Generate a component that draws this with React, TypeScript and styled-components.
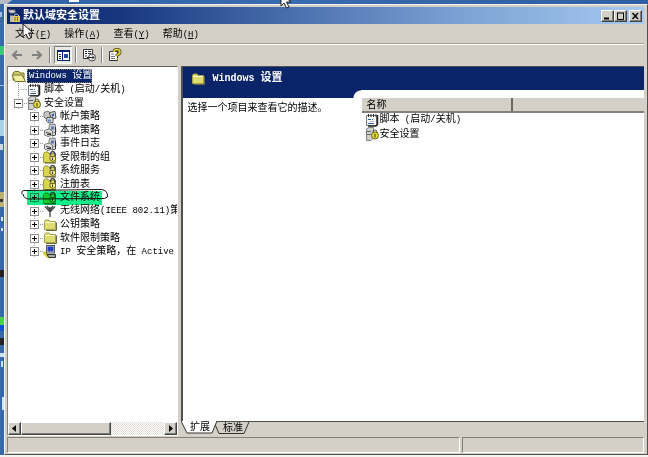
import React from "react";
import styled, { createGlobalStyle, css } from "styled-components";

const face = "#d4d0c8";
const navy = "#0a246a";

const GlobalStyle = createGlobalStyle`
  * { box-sizing: border-box; }
  html, body, #root { height: 100%; margin: 0; }
  body {
    overflow: hidden;
    background: #2f62a8;
    color: #000;
    font: 10px/13px "Liberation Mono", "Noto Sans CJK SC", monospace;
  }
  button { font: inherit; color: inherit; padding: 0; border: 0; background: none; }
  ul { list-style: none; margin: 0; padding: 0; }
`;

const raised = css`
  border: 1px solid;
  border-color: #fff #404040 #404040 #fff;
  box-shadow: inset -1px -1px #808080;
`;

const Desktop = styled.div`
  position: relative;
  display: grid;
  height: 100%;
  padding: 4px 0 2px 4px;
  background: linear-gradient(90deg, #3a6bae, #2f62a8 6px, #3a6bae 45%, #2f5fa4);
`;

const DesktopArt = styled.svg`
  position: absolute;
  left: 0;
  top: 0;
`;

const Window = styled.main`
  position: relative;
  display: flex;
  flex-direction: column;
  min-width: 0;
  min-height: 0;
  padding: 2px 3px 1px 2px;
  background: ${face};
  border: 1px solid;
  border-color: #f4f2ec #505050 #505050 #f4f2ec;
`;

const TitleBar = styled.header`
  display: flex;
  align-items: center;
  flex: none;
  height: 17px;
  padding: 0 2px 0 1px;
  gap: 2px;
  color: #fff;
  background: linear-gradient(90deg, ${navy}, #18377f 18%, #4a70ae 45%, #7b9fd2 70%, #a6caf0);
`;

const Title = styled.h1`
  flex: 1;
  margin: 0;
  font-size: 11px;
  line-height: 16px;
`;

const Captions = styled.div`
  display: flex;
`;

const CaptionButton = styled.button<{ $apart?: boolean }>`
  ${raised}
  display: grid;
  place-items: center;
  width: 13px;
  height: 12px;
  margin-left: ${(p) => (p.$apart ? 2 : 0)}px;
  background: ${face};
`;

const MenuBar = styled.nav`
  display: flex;
  align-items: center;
  flex: none;
  height: 20px;
  padding: 2px 0 0 8px;
  gap: 13px;
  border-bottom: 1px solid #a5a199;
`;

const MenuButton = styled.button`
  display: flex;
  align-items: center;
  line-height: 14px;
  white-space: nowrap;
`;

const Latin = styled.span`
  font-size: 9px;
`;

const ToolBar = styled.div`
  display: flex;
  align-items: center;
  flex: none;
  height: 22px;
  padding: 0 1px 1px;
  gap: 2px;
  border-top: 1px solid #fff;
`;

const ToolButton = styled.button<{ $pressed?: boolean }>`
  display: grid;
  place-items: center;
  width: 18px;
  height: 18px;
  ${(p) =>
    p.$pressed &&
    css`
      background: #eceae5;
      border: 1px solid;
      border-color: #808080 #fff #fff #808080;
    `}
`;

const ToolDivider = styled.span`
  width: 2px;
  height: 16px;
  margin: 0 1px;
  border-left: 1px solid #808080;
  border-right: 1px solid #fff;
`;

const Panes = styled.div`
  display: grid;
  grid-template-columns: minmax(120px, 172fr) minmax(0, 464fr);
  gap: 3px;
  flex: 1;
  min-height: 0;
`;

const TreePane = styled.section`
  display: flex;
  flex-direction: column;
  min-width: 0;
  background: #fff;
  border: 1px solid;
  border-color: #606060 #fff #fff #808080;
`;

const Tree = styled.ul`
  flex: 1;
  overflow: hidden;
  && { padding: 2px 0 0 3px; }
`;

const TreeRow = styled.li<{ $level: number; $even?: boolean }>`
  display: flex;
  align-items: center;
  height: ${(p) => (p.$even ? 14 : 13)}px;
  padding-left: ${(p) => p.$level * 16}px;
  white-space: nowrap;
`;

const Entry = styled.div<{ $marked?: boolean }>`
  position: relative;
  display: flex;
  align-items: center;
  height: 14px;
  ${(p) =>
    p.$marked &&
    css`
      padding-right: 2px;
      &::after {
        content: "";
        position: absolute;
        inset: 0;
        background: #12f08c;
        mix-blend-mode: multiply;
        pointer-events: none;
      }
    `}
`;

const Outline = styled.svg`
  position: absolute;
  left: -6px;
  top: -3px;
  z-index: 1;
`;

const Expander = styled.button`
  display: grid;
  place-items: center;
  flex: none;
  width: 16px;
  height: 13px;
`;

const Glyph = styled.svg`
  display: block;
  flex: none;
`;

const Label = styled.span<{ $selected?: boolean }>`
  display: block;
  padding: 0 0 0 3px;
  line-height: 13px;
  ${(p) => p.$selected && `padding-left: 2px; color: #fff; background: ${navy}; outline: 1px dotted #8a8466; outline-offset: -1px;`}
`;

const ScrollBar = styled.div`
  display: flex;
  flex: none;
  height: 13px;
  background: repeating-conic-gradient(#fff 0 25%, #e0ddd7 0 50%) 0 0 / 2px 2px;
`;

const ScrollArrow = styled.button`
  ${raised}
  display: grid;
  place-items: center;
  width: 13px;
  background: ${face};
`;

const Thumb = styled.div`
  ${raised}
  width: 90px;
  background: ${face};
`;

const Track = styled.div`
  flex: 1;
`;

const ResultColumn = styled.section`
  display: flex;
  flex-direction: column;
  min-width: 0;
`;

const ResultPane = styled.div`
  position: relative;
  display: flex;
  flex-direction: column;
  flex: 1;
  min-height: 0;
  background: #fff;
  border: solid #505050;
  border-width: 1px 0 1px 2px;
`;

const Banner = styled.div`
  display: flex;
  align-items: flex-start;
  flex: none;
  height: 23px;
  padding: 5px 8px;
  gap: 7px;
  color: #fff;
  background: ${navy};
`;

const BannerTitle = styled.h2`
  margin: 0;
  font-size: 10px;
  line-height: 13px;
  span { font-size: 11px; }
`;

const Extended = styled.div`
  display: grid;
  grid-template-columns: 170px minmax(0, 1fr);
`;

const Description = styled.div`
  &::before {
    content: "";
    display: block;
    height: 8px;
    background: ${navy};
  }
`;

const DescriptionText = styled.p`
  margin: 0;
  padding: 4px;
  line-height: 13px;
`;

const ListArea = styled.div`
  padding: 8px 0 0 9px;
  background: radial-gradient(circle at 8px 8px, transparent 7px, ${navy} 8px) 0 0 / 8px 8px no-repeat #fff;
`;

const List = styled.table`
  width: 100%;
  border-collapse: collapse;
  table-layout: fixed;
  th {
    height: 14px;
    padding: 2px 4px 0;
    background: ${face};
    border-bottom: 2px solid #85817a;
    font-weight: normal;
    text-align: left;
    line-height: 11px;
  }
  th + th { border-left: 2px solid #68655f; }
  th:first-child { width: 150px; }
  td { padding: 0 3px; }
`;

const Item = styled.div`
  display: flex;
  align-items: center;
  height: 14px;
  white-space: nowrap;
`;

const Tabs = styled.div`
  display: flex;
  flex: none;
  height: 14px;
`;

const Tab = styled.button<{ $active?: boolean }>`
  position: relative;
  width: 37px;
  height: 13px;
  margin-right: -4px;
  line-height: 13px;
  z-index: ${(p) => (p.$active ? 1 : 0)};
  margin-top: ${(p) => (p.$active ? -1 : 0)}px;
`;

const TabShape = styled.svg`
  position: absolute;
  left: 0;
  top: 0;
  z-index: -1;
`;

const StatusBar = styled.footer`
  display: grid;
  grid-template-columns: 455fr 183fr;
  gap: 2px;
  flex: none;
  height: 16px;
  margin-top: 1px;
`;

const StatusCell = styled.div`
  border: 1px solid;
  border-color: #85817a #fff #fff #85817a;
`;

const Cursor = styled.svg`
  position: absolute;
  pointer-events: none;
`;

const TitleCursor = styled(Cursor)`
  left: 22px;
  top: 23px;
`;

const DesktopCursor = styled(Cursor)`
  left: 280px;
  top: -8px;
`;

type IconName = "folder" | "script" | "security" | "policy" | "account" | "locked" | "wireless" | "ip";

const shapes: Record<IconName, React.ReactNode> = {
  folder: (
    <>
      <path d="M1.500 3.500L2.500 2H6L7 3.500H12.500V11.500H1.500Z" fill="#dfdc72" stroke="#a3a04a" />
      <path d="M2 4.500H12" stroke="#fffbc8" />
      <path d="M13.500 4.500V12.500H3" fill="none" stroke="#6b6a40" />
    </>
  ),
  script: (
    <>
      <path d="M1.500 2.500H11.500V12.500H1.500Z" fill="#fff" stroke="#777" />
      <path d="M12.500 2V11.500L11 13H3" fill="none" stroke="#222" strokeWidth="1.500" />
      <path d="M3.500 1V4M6 1V4M8.500 1V4M11 1V4" stroke="#333" />
      <path d="M3 6.500H6M7 6.500H8M3 10.500H9" stroke="#2f5aa0" />
      <path d="M4 8.500H9" stroke="#bbb" />
    </>
  ),
  security: (
    <>
      <path d="M1.500 2L4 .5H8.500V11L6 13.500H1.500Z" fill="#cfcfcb" stroke="#808080" />
      <path d="M2 4.500H6M2 7.500H6" stroke="#666" />
      <path d="M8 6V5Q8 3 10 3T12 5V6" fill="none" stroke="#55502a" />
      <circle cx="10" cy="8.500" r="3.500" fill="#e5db36" stroke="#6a6420" />
      <path d="M10 7V10.500" stroke="#333" />
    </>
  ),
  policy: (
    <>
      <path d="M6.500 1.500L12 1L13 9L8 11L5.500 9Z" fill="#cfd1d8" stroke="#777" />
      <path d="M8 3.500H11V6.500H8Z" fill="#5c76a8" />
      <path d="M1.500 7.500L6 6L9.500 8V12L5 13.500L1.500 12Z" fill="#e0e0dc" stroke="#777" />
      <path d="M3 9.500L8 10.500M4 11.500H8" stroke="#333" />
      <path d="M12.500 4V12L9 13" stroke="#333" fill="none" />
    </>
  ),
  account: (
    <>
      <path d="M1 2.500L5 1L8 3.500V8L3 9L1 7Z" fill="#c8c8c5" stroke="#777" />
      <path d="M6.500 2.500L12 1.500L13 8L8 9.500Z" fill="#dfe1e6" stroke="#444" />
      <path d="M8.500 4L11 3.500V6L9 7Z" fill="#405e99" />
      <path d="M4 7.500H10V12.500L6 13L3.500 11Z" fill="#ddd" stroke="#555" />
      <path d="M5 9.500H8V11.500H5Z" fill="#6784b8" />
    </>
  ),
  locked: (
    <>
      <path d="M.5 3.500L2 2H5L6 3.500H12.500V12.500H.5Z" fill="#d9d64c" stroke="#98953a" />
      <path d="M7.500 5.500V3.500Q8 1.500 9.500 1.500T12 3.500V7" fill="none" stroke="#444" strokeWidth="1.500" />
      <path d="M7 6.500H12.500V10L10 11.500L7 10Z" fill="#f3ea72" stroke="#6f6928" />
      <path d="M9.500 7.500V10" stroke="#333" />
      <path d="M2 13H13" stroke="#5c5a35" />
    </>
  ),
  wireless: (
    <path d="M7 3V13M2 2.500L7 8L12 2.500M4 2L7 6L10 2" fill="none" stroke="#444" strokeWidth="1.300" />
  ),
  ip: (
    <>
      <path d="M1 7Q3 11 7 12.500" stroke="#cfc632" strokeWidth="3" fill="none" />
      <rect x="3.500" y=".5" width="8" height="7.500" fill="#d4d4d0" stroke="#555" />
      <rect x="4.500" y="1.500" width="6" height="5" fill="#1f3fc0" />
      <path d="M4 9.500H12.500V12.500H6Z" fill="#a9a9a5" stroke="#333" />
    </>
  ),
};

const Icon = ({ name }: { name: IconName }) => (
  <Glyph width="14" height="14" viewBox="0 0 14 14" aria-hidden="true">
    {shapes[name]}
  </Glyph>
);

const Text = ({ children }: { children: string }) => (
  <>
    {children.split(/([\x20-\x7e]+)/).map((part, i) => (i % 2 ? <Latin key={i}>{part}</Latin> : part))}
  </>
);

interface TreeItem {
  label: string;
  icon: IconName;
  level: number;
  toggle: "open" | "closed";
  marked?: boolean;
}

const treeItems: TreeItem[] = [
  { label: "安全设置", icon: "security", level: 0, toggle: "open" },
  { label: "帐户策略", icon: "account", level: 1, toggle: "closed" },
  { label: "本地策略", icon: "policy", level: 1, toggle: "closed" },
  { label: "事件日志", icon: "policy", level: 1, toggle: "closed" },
  { label: "受限制的组", icon: "locked", level: 1, toggle: "closed" },
  { label: "系统服务", icon: "locked", level: 1, toggle: "closed" },
  { label: "注册表", icon: "locked", level: 1, toggle: "closed" },
  { label: "文件系统", icon: "locked", level: 1, toggle: "closed", marked: true },
  { label: "无线网络(IEEE 802.11)策略", icon: "wireless", level: 1, toggle: "closed" },
  { label: "公钥策略", icon: "folder", level: 1, toggle: "closed" },
  { label: "软件限制策略", icon: "folder", level: 1, toggle: "closed" },
  { label: "IP 安全策略，在 Active Directory", icon: "ip", level: 1, toggle: "closed" },
];

const Toggle = ({ open, label }: { open: boolean; label: string }) => (
  <Expander aria-label={label} aria-expanded={open}>
    <Glyph width="16" height="13" viewBox="0 0 16 13">
      <path d="M11 6.500H16" stroke="#999" strokeDasharray="1 1" />
      <path d="M7.500 0V2M7.500 11V13" stroke="#aaa" strokeDasharray="1 1" />
      <rect x="3.500" y="2.500" width="8" height="8" fill="#fff" stroke="#909090" />
      <path d={open ? "M5 6.500H10" : "M5 6.500H10M7.500 4V9"} stroke="#000" />
    </Glyph>
  </Expander>
);

const Pointer = () => <path d="M1 1V14L4 11L6.500 16L9 15L6.500 10H11Z" fill="#fff" stroke="#222" />;

const menus = [
  ["文件", "F"],
  ["操作", "A"],
  ["查看", "Y"],
  ["帮助", "H"],
];

export default function App() {
  return (
    <Desktop>
      <GlobalStyle />
      <DesktopArt width="648" height="457" aria-hidden="true">
        <path d="M0 0H12L7 4H0Z" fill="#b4bcc6" />
        <rect x="69" width="10" height="2" fill="#fff" />
        <path d="M0 46H4V55H0Z" fill="#35c878" />
        <path d="M0 12H2V17H0ZM0 85H4V86H0Z" fill="#9cc0e0" />
        <path d="M0 120H4V136H0Z" fill="#a9d3e8" />
        <path d="M0 144H3V150H0Z" fill="#cbd9e8" />
        <path d="M0 192H4V207H0Z" fill="#b9af72" />
        <path d="M0 199H3V202H0Z" fill="#333" />
        <path d="M1 217H3V221H1ZM1 228H3V231H1Z" fill="#dbe7ef" />
        <path d="M0 270H4V277H0ZM0 338H4V345H0Z" fill="#222" />
        <path d="M0 317H4V325H0Z" fill="#4fcf50" />
        <path d="M0 325H4V331H0Z" fill="#1552cf" />
        <path d="M0 353H4V357H0ZM1 361H3V367H1ZM2 397H4V410H2Z" fill="#cfe2f4" />
        <rect y="455" width="648" height="2" fill="#f4f4f2" />
      </DesktopArt>
      <Window>
        <TitleBar>
          <Glyph width="13" height="14" viewBox="0 0 13 14">
            <path d="M0 1H7V4H2Z" fill="#ddd" stroke="#777" />
            <path d="M2 6.500H5V13H2Z" fill="#bbb" />
            <path d="M6 7Q8 3 11 7" fill="none" stroke="#ddd" />
            <rect x="5" y="7" width="7" height="6" fill="#e2cf4b" />
            <path d="M7 8V12M9.500 8V12" stroke="#7a6d20" />
          </Glyph>
          <Title>默认域安全设置</Title>
          <Captions>
            <CaptionButton aria-label="最小化">
              <Glyph width="9" height="8"><path d="M1 6.500H6" stroke="#000" strokeWidth="2" /></Glyph>
            </CaptionButton>
            <CaptionButton aria-label="最大化">
              <Glyph width="9" height="8"><path d="M1 1H8M1.500 1V7.500H7.500V1" fill="none" stroke="#000" /></Glyph>
            </CaptionButton>
            <CaptionButton aria-label="关闭" $apart>
              <Glyph width="9" height="8"><path d="M1.500 1L7 7M7 1L1.500 7" stroke="#000" strokeWidth="1.500" /></Glyph>
            </CaptionButton>
          </Captions>
        </TitleBar>
        <MenuBar>
          {menus.map(([name, key]) => (
            <MenuButton key={key}>
              {name}
              <Latin>(<u>{key}</u>)</Latin>
            </MenuButton>
          ))}
        </MenuBar>
        <ToolBar>
          <ToolButton aria-label="后退">
            <Glyph width="12" height="12"><path d="M11 6H2M6 2L2 6L6 10" fill="none" stroke="#808080" strokeWidth="2" /></Glyph>
          </ToolButton>
          <ToolButton aria-label="前进">
            <Glyph width="12" height="12"><path d="M1 6H10M6 2L10 6L6 10" fill="none" stroke="#808080" strokeWidth="2" /></Glyph>
          </ToolButton>
          <ToolDivider />
          <ToolButton aria-label="显示/隐藏控制台树" $pressed>
            <Glyph width="13" height="11">
              <rect x=".5" y=".5" width="12" height="10" fill="#fff" stroke="#0a246a" />
              <path d="M0 1.500H13" stroke="#0a246a" />
              <path d="M5.500 2V11" stroke="#0a246a" />
              <path d="M2 4.500H4M2 6.500H4M2 8.500H4" stroke="#222" />
              <rect x="7" y="4" width="4" height="4" fill="#234a9c" />
            </Glyph>
          </ToolButton>
          <ToolDivider />
          <ToolButton aria-label="导出列表">
            <Glyph width="15" height="14">
              <path d="M1.500 1.500H10.500V10.500H1.500Z" fill="#fff" stroke="#333" />
              <path d="M3 3.500H5M6 3.500H9M3 5.500H5M6 5.500H9M3 8H5" stroke="#333" />
              <circle cx="10" cy="9.500" r="3.500" fill="#fff" stroke="#444" />
              <path d="M5 9.500H12M10 7.500L12 9.500L10 11.500" fill="none" stroke="#222" />
            </Glyph>
          </ToolButton>
          <ToolDivider />
          <ToolButton aria-label="帮助">
            <Glyph width="14" height="14">
              <path d="M1.500 3.500H9.500V12.500H1.500Z" fill="#fff" stroke="#333" />
              <path d="M3 6H6M3 8.500H7M3 10.500H7" stroke="#777" />
              <path d="M6 4Q6 1.500 9 1.500T12 4Q12 6 9 7V8" fill="none" stroke="#4c4818" strokeWidth="3" />
              <path d="M6 4Q6 1.500 9 1.500T12 4Q12 6 9 7V8M9 10V11.500" fill="none" stroke="#e2d62c" strokeWidth="1.500" />
            </Glyph>
          </ToolButton>
        </ToolBar>
        <Panes>
          <TreePane>
            <Tree>
              <TreeRow $level={0} $even>
                <Glyph width="16" height="13">
                  <path d="M2 10V3L4 1.500H8L9 3H13V10Z" fill="#cfcb68" stroke="#77742e" />
                  <path d="M1 5H11L14.500 11.500H4Z" fill="#f0eda0" stroke="#77742e" />
                </Glyph>
                <Label $selected><Text>Windows 设置</Text></Label>
              </TreeRow>
              <TreeRow $level={0}>
                <Glyph width="16" height="13"><path d="M7.500 0V13M7.500 6.500H16" stroke="#999" strokeDasharray="1 1" /></Glyph>
                <Icon name="script" />
                <Label><Text>脚本 (启动/关机)</Text></Label>
              </TreeRow>
              {treeItems.map((item, i) => (
                <TreeRow key={item.label} $level={item.level} $even={i % 2 === 0}>
                  <Entry $marked={item.marked}>
                    <Toggle open={item.toggle === "open"} label={item.label} />
                    <Icon name={item.icon} />
                    <Label><Text>{item.label}</Text></Label>
                    {item.marked && (
                      <Outline width="90" height="18" fill="none" stroke="#111">
                        <path d="M1 6Q0 2 5 2.500L80 1.500Q87 2 86.500 9Q84 11 80 10.500L8 11Q3 11 2 6" />
                      </Outline>
                    )}
                  </Entry>
                </TreeRow>
              ))}
            </Tree>
            <ScrollBar>
              <ScrollArrow aria-label="向左滚动"><Glyph width="5" height="7"><path d="M4 0V7L0 3.500Z" /></Glyph></ScrollArrow>
              <Thumb />
              <Track />
              <ScrollArrow aria-label="向右滚动"><Glyph width="5" height="7"><path d="M1 0V7L5 3.500Z" /></Glyph></ScrollArrow>
            </ScrollBar>
          </TreePane>
          <ResultColumn>
            <ResultPane>
              <Banner>
                <Icon name="folder" />
                <BannerTitle>Windows <span>设置</span></BannerTitle>
              </Banner>
              <Extended>
                <Description>
                  <DescriptionText>选择一个项目来查看它的描述。</DescriptionText>
                </Description>
                <ListArea>
                  <List>
                    <thead>
                      <tr><th scope="col">名称</th><th scope="col" aria-label="空" /></tr>
                    </thead>
                    <tbody>
                      <tr><td colSpan={2}><Item><Icon name="script" /><span><Text>脚本 (启动/关机)</Text></span></Item></td></tr>
                      <tr><td colSpan={2}><Item><Icon name="security" />安全设置</Item></td></tr>
                    </tbody>
                  </List>
                </ListArea>
              </Extended>
            </ResultPane>
            <Tabs role="tablist">
              <Tab role="tab" aria-selected="true" $active>
                <TabShape width="37" height="13"><path d="M0 0L6 12H31L36 0" fill="#fff" stroke="#333" /></TabShape>
                扩展
              </Tab>
              <Tab role="tab" aria-selected="false">
                <TabShape width="37" height="13"><path d="M0 0L5 11.500H30L35 0" fill={face} stroke="#333" /></TabShape>
                标准
              </Tab>
            </Tabs>
          </ResultColumn>
        </Panes>
        <StatusBar>
          <StatusCell />
          <StatusCell />
        </StatusBar>
      </Window>
      <TitleCursor width="12" height="17"><Pointer /></TitleCursor>
      <DesktopCursor width="12" height="17"><Pointer /></DesktopCursor>
    </Desktop>
  );
}
